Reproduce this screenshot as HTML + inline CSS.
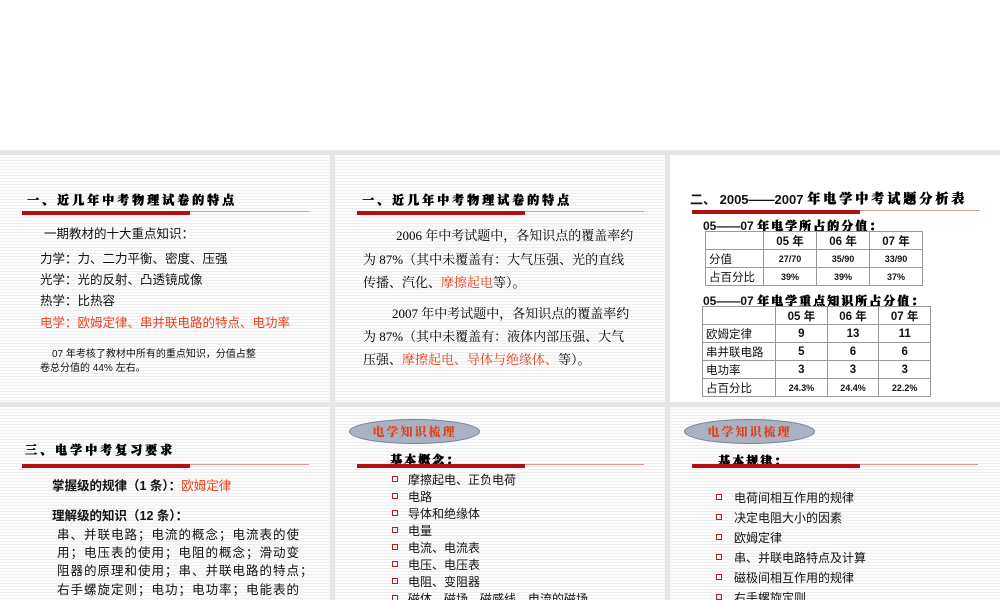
<!DOCTYPE html>
<html style="overflow:hidden;height:600px"><head><meta charset="utf-8"><style>
*{margin:0;padding:0;box-sizing:border-box}
body{width:1000px;height:600px;background:#fff;position:relative;overflow:hidden;font-family:"Liberation Sans","Noto Sans CJK SC",sans-serif;color:#111}
.gap{position:absolute;left:0;top:150px;width:1000px;height:450px;background:#e6e6e6}
.p{position:absolute;overflow:hidden;background:repeating-linear-gradient(#fbfbfb 0 2px,#efefef 2px 3px)}
.w{background:#fff}
.a{position:absolute;white-space:nowrap}
.h{font-weight:900;font-size:12px;letter-spacing:3px;font-family:"Noto Serif CJK SC",serif;color:#000;text-shadow:0.5px 0 0 #000,0 0.4px 0 #000}
.bar{position:absolute;height:4px;background:#b01010}
.thin{position:absolute;height:1px;background:#d89a9a}
.r{color:#e8401c}
.t{font-size:12.5px}
.s{font-family:"Liberation Serif","Noto Serif CJK SC",serif;font-size:13px;color:#000}
.b{position:absolute;width:6px;height:6px;border:1px solid #b02020}
table{position:absolute;border-collapse:collapse;font-size:11.5px}
td{border:1px solid #999;height:18px;padding:0 3px;text-align:center;font-weight:bold}
td.l{text-align:left;font-weight:normal}
.sm{font-size:9px}
.ell{position:absolute;width:131px;height:25px;border-radius:50%;background:#a8b2c2;border:1px solid #6f7f95;color:#e0401c;font-weight:900;font-size:12px;text-align:center;line-height:24px;letter-spacing:2px;font-family:"Noto Serif CJK SC",serif}
</style></head><body>
<div class="gap"></div>
<div class="p" style="left:0;top:155px;width:330px;height:247px"></div>
<div class="p" style="left:335px;top:155px;width:330px;height:247px"></div>
<div class="p w" style="left:670px;top:155px;width:330px;height:247px"></div>
<div class="p" style="left:0;top:407px;width:330px;height:193px"></div>
<div class="p" style="left:335px;top:407px;width:330px;height:193px"></div>
<div class="p" style="left:670px;top:407px;width:330px;height:193px"></div>

<!-- panel 1 -->
<div class="a h" style="left:27px;top:191px">一、近几年中考物理试卷的特点</div>
<div class="thin" style="left:22px;top:211px;width:287px"></div>
<div class="bar" style="left:22px;top:211px;width:168px"></div>
<div class="a t" style="left:44px;top:223px">一期教材的十大重点知识：</div>
<div class="a t" style="left:40px;top:248px">力学：力、二力平衡、密度、压强</div>
<div class="a t" style="left:40px;top:269px">光学：光的反射、凸透镜成像</div>
<div class="a t" style="left:40px;top:290px">热学：比热容</div>
<div class="a t r" style="left:40px;top:312px">电学：欧姆定律、串并联电路的特点、电功率</div>
<div class="a" style="left:52px;top:345px;font-size:10px">07 年考核了教材中所有的重点知识，分值占整</div>
<div class="a" style="left:40px;top:359px;font-size:10px">卷总分值的 44% 左右。</div>

<!-- panel 2 -->
<div class="a h" style="left:362px;top:191px">一、近几年中考物理试卷的特点</div>
<div class="thin" style="left:357px;top:211px;width:287px"></div>
<div class="bar" style="left:357px;top:211px;width:168px"></div>
<div class="a s" style="left:396px;top:225px">2006 年中考试题中，各知识点的覆盖率约</div>
<div class="a s" style="left:363px;top:249px">为 87%（其中未覆盖有：大气压强、光的直线</div>
<div class="a s" style="left:363px;top:272px">传播、汽化、<span class="r">摩擦起电</span>等）。</div>
<div class="a s" style="left:392px;top:303px">2007 年中考试题中，各知识点的覆盖率约</div>
<div class="a s" style="left:363px;top:326px">为 87%（其中未覆盖有：液体内部压强、大气</div>
<div class="a s" style="left:363px;top:349px">压强、<span class="r">摩擦起电、导体与绝缘体、</span>等）。</div>

<!-- panel 3 -->
<div class="a" style="left:690px;top:189px;font-size:13px;font-weight:bold">二、 2005——2007 <span class="h" style="font-size:13px;position:relative;top:-1px">年电学中考试题分析表</span></div>
<div class="thin" style="left:692px;top:210px;width:288px"></div>
<div class="bar" style="left:692px;top:210px;width:168px"></div>
<div class="a" style="left:703px;top:217px;font-size:12px;font-weight:bold">05——07 <span class="h" style="letter-spacing:2px">年电学所占的分值：</span></div>
<table style="left:705px;top:231px;width:218px">
<tr><td style="width:58px"></td><td>05 年</td><td>06 年</td><td>07 年</td></tr>
<tr><td class="l">分值</td><td class="sm">27/70</td><td class="sm">35/90</td><td class="sm">33/90</td></tr>
<tr><td class="l">占百分比</td><td class="sm">39%</td><td class="sm">39%</td><td class="sm">37%</td></tr>
</table>
<div class="a" style="left:703px;top:292px;font-size:12px;font-weight:bold">05——07 <span class="h" style="letter-spacing:2px">年电学重点知识所占分值：</span></div>
<table style="left:702px;top:306px;width:229px">
<tr><td style="width:73px"></td><td>05 年</td><td>06 年</td><td>07 年</td></tr>
<tr><td class="l">欧姆定律</td><td>9</td><td>13</td><td>11</td></tr>
<tr><td class="l">串并联电路</td><td>5</td><td>6</td><td>6</td></tr>
<tr><td class="l">电功率</td><td>3</td><td>3</td><td>3</td></tr>
<tr><td class="l">占百分比</td><td class="sm">24.3%</td><td class="sm">24.4%</td><td class="sm">22.2%</td></tr>
</table>

<!-- panel 4 -->
<div class="a h" style="left:25px;top:441px">三、电学中考复习要求</div>
<div class="thin" style="left:22px;top:464px;width:287px"></div>
<div class="bar" style="left:22px;top:464px;width:168px"></div>
<div class="a t" style="left:52px;top:475px;font-weight:bold">掌握级的规律（1 条）：<span class="r" style="font-weight:normal">欧姆定律</span></div>
<div class="a t" style="left:52px;top:505px;font-weight:bold">理解级的知识（12 条）：</div>
<div class="a t" style="left:57px;top:524px;letter-spacing:1px">串、并联电路；电流的概念；电流表的使</div>
<div class="a t" style="left:57px;top:542px;letter-spacing:1px">用；电压表的使用；电阻的概念；滑动变</div>
<div class="a t" style="left:57px;top:560px;letter-spacing:1px">阻器的原理和使用；串、并联电路的特点；</div>
<div class="a t" style="left:57px;top:579px;letter-spacing:1px">右手螺旋定则；电功；电功率；电能表的</div>

<!-- panel 5 -->
<div class="ell" style="left:349px;top:419px">电学知识梳理</div>
<div class="a h" style="left:390px;top:451px;letter-spacing:2px">基本概念：</div>
<div class="thin" style="left:357px;top:464px;width:287px"></div>
<div class="bar" style="left:357px;top:464px;width:168px"></div>
<div class="b" style="left:392px;top:476px"></div><div class="a" style="left:408px;top:471px;font-size:12px">摩擦起电、正负电荷</div>
<div class="b" style="left:392px;top:493px"></div><div class="a" style="left:408px;top:488px;font-size:12px">电路</div>
<div class="b" style="left:392px;top:510px"></div><div class="a" style="left:408px;top:505px;font-size:12px">导体和绝缘体</div>
<div class="b" style="left:392px;top:527px"></div><div class="a" style="left:408px;top:522px;font-size:12px">电量</div>
<div class="b" style="left:392px;top:544px"></div><div class="a" style="left:408px;top:539px;font-size:12px">电流、电流表</div>
<div class="b" style="left:392px;top:561px"></div><div class="a" style="left:408px;top:556px;font-size:12px">电压、电压表</div>
<div class="b" style="left:392px;top:578px"></div><div class="a" style="left:408px;top:573px;font-size:12px">电阻、变阻器</div>
<div class="b" style="left:392px;top:595px"></div><div class="a" style="left:408px;top:590px;font-size:12px">磁体、磁场、磁感线、电流的磁场</div>

<!-- panel 6 -->
<div class="ell" style="left:684px;top:419px">电学知识梳理</div>
<div class="a h" style="left:718px;top:452px;letter-spacing:2px">基本规律：</div>
<div class="thin" style="left:692px;top:464px;width:286px"></div>
<div class="bar" style="left:692px;top:464px;width:168px"></div>
<div class="b" style="left:716px;top:494px"></div><div class="a" style="left:734px;top:489px;font-size:12px">电荷间相互作用的规律</div>
<div class="b" style="left:716px;top:514px"></div><div class="a" style="left:734px;top:509px;font-size:12px">决定电阻大小的因素</div>
<div class="b" style="left:716px;top:534px"></div><div class="a" style="left:734px;top:529px;font-size:12px">欧姆定律</div>
<div class="b" style="left:716px;top:554px"></div><div class="a" style="left:734px;top:549px;font-size:12px">串、并联电路特点及计算</div>
<div class="b" style="left:716px;top:574px"></div><div class="a" style="left:734px;top:569px;font-size:12px">磁极间相互作用的规律</div>
<div class="b" style="left:716px;top:594px"></div><div class="a" style="left:734px;top:589px;font-size:12px">右手螺旋定则</div>
</body></html>
